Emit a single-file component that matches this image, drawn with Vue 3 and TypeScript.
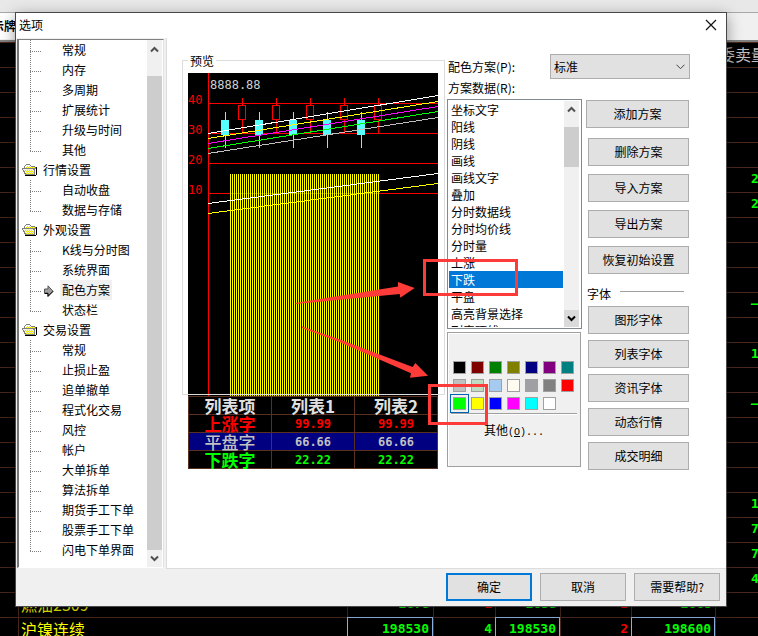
<script setup lang="ts">
import { ref } from 'vue'

interface TreeNode { label: string; kind: 'group' | 'leaf'; last?: boolean; current?: boolean }
interface QuoteCell { text: string; tone?: 'up' | 'down'; boxed?: boolean }

const group = (label: string): TreeNode => ({ label, kind: 'group' })
const leaves = (...labels: string[]): TreeNode[] =>
  labels.map((label, i) => ({ label, kind: 'leaf', last: i === labels.length - 1, current: label === '配色方案' }))

const tree: TreeNode[] = [
  ...leaves('常规', '内存', '多周期', '扩展统计', '升级与时间', '其他'),
  group('行情设置'),
  ...leaves('自动收盘', '数据与存储'),
  group('外观设置'),
  ...leaves('K线与分时图', '系统界面', '配色方案', '状态栏'),
  group('交易设置'),
  ...leaves('常规', '止损止盈', '追单撤单', '程式化交易', '风控', '帐户', '大单拆单', '算法拆单', '期货手工下单', '股票手工下单', '闪电下单界面'),
]

const scheme = ref('标准')
const items = ['坐标文字', '阳线', '阴线', '画线', '画线文字', '叠加', '分时数据线', '分时均价线', '分时量', '上涨', '下跌', '平盘', '高亮背景选择', '列表项线']
const item = ref('下跌')

const swatches = [
  '#000000', '#800000', '#008000', '#808000', '#000080', '#800080', '#008080',
  '#c0c0c0', '#c0dcc0', '#a6caf0', '#fffbf0', '#a0a0a4', '#808080', '#ff0000',
  '#00ff00', '#ffff00', '#0000ff', '#ff00ff', '#00ffff', '#ffffff',
]
const color = ref('#00ff00')

const schemeActions = ['添加方案', '删除方案', '导入方案', '导出方案', '恢复初始设置']
const fontActions = ['图形字体', '列表字体', '资讯字体', '动态行情', '成交明细']

const levels = [{ v: 40, y: 30 }, { v: 30, y: 60 }, { v: 20, y: 90 }, { v: 10, y: 120 }]
const averages = [
  { c: '#ffffff', a: 60, b: 22 },
  { c: '#ffff00', a: 65, b: 28 },
  { c: '#ff00ff', a: 70, b: 33 },
  { c: '#00ff00', a: 75, b: 38 },
  { c: '#c0c0c0', a: 80, b: 44 },
  { c: '#ffffff', a: 130, b: 100 },
  { c: '#ffff00', a: 140, b: 110 },
]
const candles = [0, 34, 68, 102, 136]
const bars = Array.from({ length: 75 }, (_, i) => 42 + i * 2)

const sample = [
  { name: '上涨字', value: '99.99', cls: 'rise' },
  { name: '平盘字', value: '66.66', cls: 'flat' },
  { name: '下跌字', value: '22.22', cls: 'fall' },
]

const edge: Record<number, string> = { 5: '2', 6: '2', 10: '—', 12: '1', 14: '—', 18: '1', 19: '7', 20: '7', 21: '4' }
const blanks = Array.from({ length: 21 }, (_, i) => edge[i + 1] ?? '')
const quotes: { name: string; cells: QuoteCell[] }[] = [
  { name: '燃油2309', cells: [{ text: '2679' }, { text: '1', tone: 'up' }, { text: '2633' }, { text: '2', tone: 'up' }, { text: '2669' }] },
  { name: '沪镍连续', cells: [{ text: '198530', boxed: true }, { text: '4' }, { text: '198530', boxed: true }, { text: '2', tone: 'up' }, { text: '198600', boxed: true }] },
]
</script>

<template>
  <div class="screen">
    <div class="market">
      <div class="ribbon"></div>
      <div class="tabs"><span>示牌</span></div>
      <table class="quotes">
        <colgroup>
          <col class="c-no"><col class="c-name"><col class="c-a"><col class="c-b"><col class="c-c"><col class="c-d"><col class="c-e"><col class="c-f">
        </colgroup>
        <thead>
          <tr><th colspan="7"></th><th class="sell">委卖量</th></tr>
        </thead>
        <tbody>
          <tr v-for="(b, i) in blanks" :key="i"><td></td><td colspan="6"></td><td class="edge">{{ b }}</td></tr>
          <tr v-for="q in quotes" :key="q.name">
            <td></td>
            <td class="name">{{ q.name }}</td>
            <td v-for="(c, i) in q.cells" :key="i" class="num" :class="[c.tone, { boxed: c.boxed }]">{{ c.text }}</td>
            <td></td>
          </tr>
        </tbody>
      </table>
    </div>

    <section class="dialog" role="dialog" aria-labelledby="dialog-title">
      <header class="titlebar">
        <h1 id="dialog-title">选项</h1>
        <button class="close" type="button" aria-label="关闭">
          <svg width="12" height="12" viewBox="0 0 12 12"><path d="M1 1L11 11M11 1L1 11" stroke="#111" stroke-width="1.2" fill="none" /></svg>
        </button>
      </header>

      <div class="body">
        <nav class="side">
          <div class="tree">
            <ul>
              <li v-for="(n, i) in tree" :key="i" :class="[n.kind, { last: n.last }]">
                <svg v-if="n.kind === 'group'" class="folder" width="16" height="14" viewBox="0 0 16 14" shape-rendering="crispEdges">
                  <path d="M3 13H14V12H15V4H14V12H3Z" fill="#000" />
                  <path d="M2 3H3V2H4V1H8V2H9V3H13V11H2Z" fill="#fff" />
                  <path d="M2 3H3V2H4V1H8V2H9V3H13V4H14V6H13V4H9V3H8V2H4V3H3V6H2Z" fill="#808080" />
                  <path d="M0 5H13V12H3V11H2V9H1V7H0Z" fill="#808080" />
                  <path d="M1 6H11V7H12V11H4V10H3V8H2V7H1Z" fill="#f4f4d0" />
                  <path d="M3 7h1v1h-1zM5 7h1v1h-1zM7 7h1v1h-1zM9 7h1v1h-1zM4 8h1v1h-1zM6 8h1v1h-1zM8 8h1v1h-1zM10 8h1v1h-1zM5 9h1v1h-1zM7 9h1v1h-1zM9 9h1v1h-1zM11 9h1v1h-1zM4 10h1v1h-1zM6 10h1v1h-1zM8 10h1v1h-1zM10 10h1v1h-1zM5 3h1v1h-1zM7 3h1v1h-1zM4 4h1v1h-1zM6 4h1v1h-1zM8 4h1v1h-1zM10 4h1v1h-1zM12 4h1v1h-1z" fill="#e6e600" />
                </svg>
                <svg v-if="n.current" class="pointer" width="10" height="12" viewBox="0 0 10 12">
                  <path d="M.5 4H4V.8L8.8 6L4 11V8H.5Z" fill="#a0a0a0" stroke="#555" />
                  <path d="M.5 8.5H4V11.5L9.3 6.2" fill="none" stroke="#000" />
                </svg>
                <a href="#" :class="{ current: n.current }">{{ n.label }}</a>
              </li>
            </ul>
            <div class="scroll tree-scroll">
              <button type="button" aria-label="向上滚动"><svg width="9" height="7" viewBox="0 0 9 7"><path d="M1 5.5L4.5 2L8 5.5" /></svg></button>
              <i></i>
              <button type="button" aria-label="向下滚动"><svg width="9" height="7" viewBox="0 0 9 7"><path d="M1 1.5L4.5 5L8 1.5" /></svg></button>
            </div>
          </div>
        </nav>

        <main class="page">
          <section class="preview">
            <h2>预览</h2>
            <div class="sheet">
              <svg class="chart" viewBox="0 0 250 323" shape-rendering="crispEdges">
                <rect width="250" height="323" fill="#000" />
                <g fill="#f00">
                  <rect x="20" y="0" width="1" height="323" />
                  <rect v-for="l in levels" :key="l.v" x="20" :y="l.y" width="230" height="1" />
                </g>
                <text v-for="l in levels" :key="l.v" x="0" :y="l.y + 1" fill="#f00">{{ l.v }}</text>
                <text x="22" y="16" fill="#d0d0d0">8888.88</text>
                <rect v-for="x in bars" :key="x" :x="x" y="101" width="1" height="222" fill="#ff0" />
                <g v-for="d in candles" :key="d">
                  <rect :x="37 + d" y="39" width="1" height="36" fill="#55ffff" />
                  <rect :x="33 + d" y="47" width="8" height="15" fill="#55ffff" />
                  <path :d="`M${54.5 + d} 25V32M${54.5 + d} 47V60M${50.5 + d} 32.5h7v14h-7z`" fill="none" stroke="#f00" />
                </g>
                <line v-for="(m, i) in averages" :key="i" x1="20" :y1="m.a + .5" x2="250" :y2="m.b + .5" :stroke="m.c" />
              </svg>
              <table class="sample">
                <thead><tr><th>列表项</th><th>列表1</th><th>列表2</th></tr></thead>
                <tbody>
                  <tr v-for="s in sample" :key="s.name" :class="s.cls">
                    <th>{{ s.name }}</th><td>{{ s.value }}</td><td>{{ s.value }}</td>
                  </tr>
                </tbody>
              </table>
            </div>
          </section>

          <section class="settings">
            <div class="scheme">
              <label for="scheme">配色方案(P):</label>
              <div class="combo">
                <select id="scheme" v-model="scheme"><option>标准</option></select>
                <svg width="9" height="6" viewBox="0 0 9 6"><path d="M.5 .7L4.5 4.7L8.5 .7" fill="none" stroke="#444" /></svg>
              </div>
            </div>
            <div class="columns">
              <div class="data">
                <label for="items">方案数据(R):</label>
                <div class="listbox">
                  <select id="items" v-model="item" size="14">
                    <option v-for="o in items" :key="o" :value="o">{{ o }}</option>
                  </select>
                  <div class="scroll list-scroll">
                    <button type="button" aria-label="向上滚动"><svg width="9" height="7" viewBox="0 0 9 7"><path d="M1 5.5L4.5 2L8 5.5" /></svg></button>
                    <i></i>
                    <button type="button" aria-label="向下滚动" class="down"><svg width="9" height="7" viewBox="0 0 9 7"><path d="M1 1.5L4.5 5L8 1.5" /></svg></button>
                  </div>
                </div>
                <div class="palette">
                  <div class="swatches">
                    <button
                      v-for="s in swatches" :key="s" type="button" :aria-label="s"
                      :class="{ picked: s === color }" :style="{ backgroundColor: s }" @click="color = s"
                    ></button>
                  </div>
                  <button class="more" type="button">其他<span>(<u>O</u>)...</span></button>
                </div>
              </div>
              <div class="actions">
                <button v-for="a in schemeActions" :key="a" class="btn" type="button">{{ a }}</button>
                <h2 class="rule">字体</h2>
                <div class="fonts">
                  <button v-for="a in fontActions" :key="a" class="btn" type="button">{{ a }}</button>
                </div>
              </div>
            </div>
          </section>
        </main>
      </div>

      <footer class="footer">
        <button class="btn primary" type="button">确定</button>
        <button class="btn" type="button">取消</button>
        <button class="btn" type="button">需要帮助?</button>
      </footer>
    </section>

    <svg class="marks" width="225" height="172" viewBox="295 255 225 172" aria-hidden="true">
      <g fill="#fd3b38">
        <path d="M295 303L398 286.500L398 282L414.700 288L400.300 297.700L399.700 294L296 304Z" />
        <path d="M302 326.500L340 339.500L412.700 367L415.300 363L428 375.700L410 377.700L411 373.300L338 341.500L302 328Z" />
      </g>
      <g fill="none" stroke="#fd3b38" stroke-width="3">
        <rect x="424.500" y="260.500" width="92" height="34" />
        <rect x="429.500" y="385.500" width="57" height="38" />
      </g>
    </svg>
  </div>
</template>

<style>
body { background: #000; }
</style>

<style scoped>
.screen {
  position: relative;
  display: grid;
  grid-template-columns: minmax(0, 1fr);
  min-height: 100vh;
  overflow: hidden;
  background: #000;
  color: #000;
  font-family: "Noto Sans CJK SC", sans-serif;
  font-size: 12px;
  line-height: 16px;
}
.screen * { box-sizing: border-box; }
button, select { font: inherit; color: inherit; margin: 0; padding: 0; border-radius: 0; }
h1, h2 { margin: 0; font-size: 12px; font-weight: 400; }
ul { margin: 0; padding: 0; list-style: none; }

/* market window behind the dialog */
.market { grid-area: 1 / 1; height: 0; min-height: 100%; overflow: hidden; }
.ribbon { height: 13px; background: #e8e8e8; border-bottom: 1px solid #a8a8a8; }
.tabs { height: 29px; background: #f0f0f0; border-bottom: 2px solid #808080; }
.tabs span { display: block; width: 16px; height: 26px; line-height: 26px; direction: rtl; overflow: hidden; white-space: nowrap; background: #fff; font-weight: 700; }
.quotes { width: 780px; table-layout: fixed; border-collapse: separate; border-spacing: 0; font-size: 16px; line-height: 22px; color: #0f0; }
.c-no { width: 18px; } .c-name { width: 329px; } .c-a { width: 86px; } .c-b { width: 62px; }
.c-c { width: 65px; } .c-d { width: 71px; } .c-e { width: 84px; }
.quotes th, .quotes td { height: 25px; padding: 0 3px 2px; border-top: 1px solid #4a281c; border-left: 1px solid #4a281c; white-space: nowrap; overflow: hidden; }
.quotes tr > :first-child { border-left: 0; }
.quotes .sell { color: #c0c0c0; font-weight: 400; text-align: left; }
.quotes .edge { padding-left: 35px; font: 700 13px/22px "DejaVu Sans Mono", monospace; }
.quotes .name { color: #ff0; padding-left: 2px; }
.quotes .num { text-align: right; font: 700 13px/22px "DejaVu Sans Mono", monospace; }
.quotes .up { color: #f00; }
.quotes .boxed { border: 1px solid #8fb0e0; border-bottom: 0; }

/* dialog frame */
.dialog {
  grid-area: 1 / 1;
  align-self: start;
  z-index: 1;
  margin: 12px 31px 30px 15px;
  display: flex;
  flex-direction: column;
  background: #f0f0f0;
  border: 1px solid #484848;
  box-shadow: 0 4px 14px rgba(0, 0, 0, .4);
}
.titlebar { display: flex; align-items: center; justify-content: space-between; height: 25px; padding: 0 9px 2px 3px; background: #fff; }
.close { display: flex; width: 12px; height: 12px; border: 0; background: none; }
.body { display: flex; }
.side { flex: none; padding: 1px 1px; }

.tree { display: flex; width: 147px; height: 529px; border: 1px solid; border-color: #808080 #e3e3e3 #fff #a0a0a0; border-left: 2px solid #777; background: #fff; overflow: hidden; }
.tree ul { flex: 1; min-width: 0; }
.tree li { display: flex; align-items: center; height: 20px; white-space: nowrap; position: relative; }
.leaf {
  padding-left: 41px;
  background:
    repeating-linear-gradient(#808080 0 1px, transparent 1px 2px) 11px 0 / 1px 100% no-repeat,
    repeating-linear-gradient(90deg, #808080 0 1px, transparent 1px 2px) 11px 11px / 12px 1px no-repeat;
}
.leaf.last {
  background:
    repeating-linear-gradient(#808080 0 1px, transparent 1px 2px) 11px 0 / 1px 12px no-repeat,
    repeating-linear-gradient(90deg, #808080 0 1px, transparent 1px 2px) 11px 11px / 12px 1px no-repeat;
}
.group { padding-left: 3px; gap: 3px; }
.tree a { padding: 0 2px; line-height: 20px; color: #000; text-decoration: none; }
.tree a.current { background: #f0f0f0; }
.pointer { position: absolute; left: 25px; top: 5px; }

.scroll { display: flex; flex-direction: column; width: 15px; flex: none; background: #f0f0f0; }
.scroll button { display: flex; align-items: center; justify-content: center; height: 17px; border: 0; background: none; }
.scroll path { fill: none; stroke: #505050; stroke-width: 2; }
.scroll i { background: #cdcdcd; }
.tree-scroll { padding-top: 1px; margin-right: 1px; }
.tree-scroll i { flex: 1; margin-top: 18px; }

/* colour scheme page */
.page { flex: 1; min-width: 0; display: flex; gap: 2px; padding: 16px 36px 0 15px; margin-left: 1px; background: #fff; border-left: 1px solid #dcdcdc; border-bottom: 1px solid #dcdcdc; }
.preview { position: relative; flex: none; width: 263px; padding: 0 6px; }
.preview::after { content: ""; position: absolute; top: 6px; right: 0; left: 0; height: 333px; border: 1px solid #dcdcdc; pointer-events: none; }
.preview h2 { position: relative; z-index: 1; width: 28px; height: 19px; padding: 0 2px; line-height: 14px; white-space: nowrap; background: linear-gradient(#fff, #fff) 0 0 / 100% 16px no-repeat; }
.sheet { width: 250px; }
.chart { display: block; width: 100%; font-family: "DejaVu Sans Mono", monospace; font-size: 12px; }
.sample { width: 100%; table-layout: fixed; border-collapse: collapse; background: #000; color: #e0e0e0; text-align: center; }
.sample th, .sample td { height: 18px; padding: 0; border: 1px solid #5a3020; line-height: 16px; }
.sample th { font-size: 17px; font-weight: 500; }
.sample td { font: 700 12px/16px "DejaVu Sans Mono", monospace; }
.sample tr:last-child th { font-weight: 700; }
.sample .rise th { font-weight: 700; }
.rise { color: #f00; } .fall { color: #0f0; } .flat { color: #c0c0c0; background: #000080; }

.settings { flex: 1; min-width: 0; }
.scheme { display: flex; align-items: center; height: 25px; }
.scheme label { width: 103px; padding-left: 1px; }
.combo { position: relative; flex: 1; }
.combo select { display: block; width: 100%; height: 25px; padding-left: 3px; appearance: none; border: 1px solid #adadad; background: #e1e1e1; }
.combo svg { position: absolute; right: 5px; top: 10px; }
.columns { display: flex; gap: 6px; }
.data { flex: 1; min-width: 0; }
.data label { display: block; height: 20px; padding: 1px 1px 0; }
.listbox { display: flex; height: 230px; padding: 1px; border: 1px solid #828790; background: #fff; }
.listbox select { flex: 1; min-width: 0; height: 226px; border: 0; outline: 0; overflow: hidden; background: #fff; scrollbar-width: none; }
.listbox option { height: 17px; min-height: 17px; padding: 0 2px; line-height: 17px; }
.listbox option:checked { background: linear-gradient(#0078d7, #0078d7); -webkit-text-fill-color: #fff; }
.list-scroll { margin-left: 1px; margin-right: 1px; }
.list-scroll i { height: 40px; margin: 9px 0 auto; }
.list-scroll .down { background: #dadada; }
.list-scroll .down path { stroke: #000; }

.palette { height: 135px; margin: 3px 1px 0 0; padding: 26px 3px 0; border: 1px solid #a0a0a0; box-shadow: inset 1px 1px #fff; background: #f0f0f0; }
.swatches { display: grid; grid-template-columns: repeat(7, 13px); gap: 5px; padding: 2px 2px 3px; border-bottom: 1px solid #a0a0a0; box-shadow: 0 1px #fff; }
.swatches button { width: 13px; height: 13px; border: 1px solid #a0a0a0; }
.swatches .picked { outline: 1px solid #0063b1; outline-offset: 2px; }
.more { display: block; margin: 7px auto 0; border: 0; background: none; line-height: 18px; }
.more span { font-family: "Liberation Mono", monospace; font-size: 10px; }

.actions { flex: none; width: 101px; margin-right: 1px; padding-top: 21px; display: flex; flex-direction: column; gap: 8px; }
.btn { height: 28px; border: 1px solid #adadad; background: #e1e1e1; text-align: center; white-space: nowrap; }
.actions > .btn:first-child { margin: 0 0 2px -2px; }
.rule { display: flex; gap: 9px; height: 16px; margin: 4px 5px -4px -1px; }
.rule::after { content: ""; flex: 1; height: 5px; border-bottom: 1px solid #a0a0a0; }
.fonts { display: flex; flex-direction: column; gap: 6px; }

.footer { display: flex; justify-content: flex-end; gap: 8px; padding: 4px 6px 5px; }
.footer .btn { width: 86px; }
.footer .primary { border: 2px solid #0078d7; }

.marks { position: absolute; left: 295px; top: 255px; z-index: 2; pointer-events: none; }
</style>
